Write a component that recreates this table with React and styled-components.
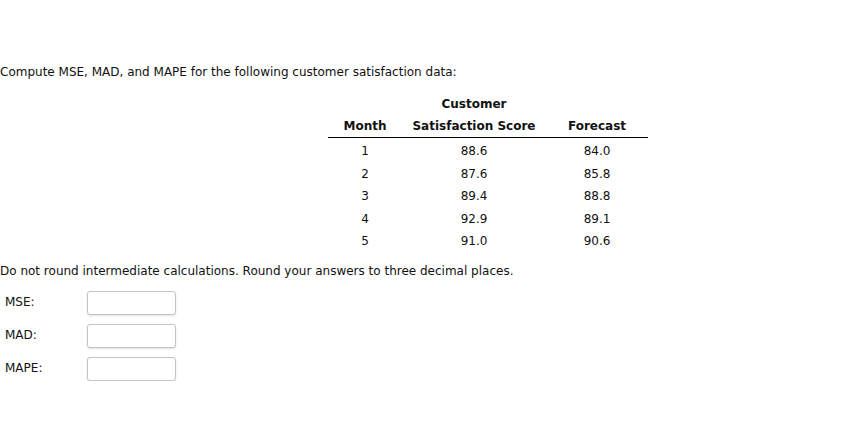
import React from "react";
import styled, { createGlobalStyle } from "styled-components";

const GlobalStyle = createGlobalStyle`
  html, body {
    margin: 0;
    padding: 0;
    background: #ffffff;
  }
  body {
    font-family: Verdana, "DejaVu Sans", sans-serif;
    font-size: 12px;
    color: #111111;
  }
`;

const Page = styled.div`
  padding-top: 64px;
  display: flex;
  flex-direction: column;
`;

const Prompt = styled.p`
  margin: 0;
  line-height: 16px;
`;

const DataTable = styled.table`
  margin: 13px 0 0 328px;
  border-collapse: collapse;
  width: 320px;
  table-layout: fixed;
`;

const HeadCell = styled.th`
  font-weight: bold;
  text-align: center;
  padding: 0;
  height: ${(p) => p.$h}px;
  vertical-align: middle;
  border-bottom: ${(p) => (p.$rule ? "1px solid #000" : "none")};
`;

const Cell = styled.td`
  text-align: center;
  padding: 4px 0 0;
  height: 18.5px;
  vertical-align: middle;
`;

const Note = styled.p`
  margin: 12px 0 0;
  line-height: 16px;
`;

const Form = styled.div`
  margin-top: 12px;
  display: flex;
  flex-direction: column;
  gap: 9px;
  padding-left: 5px;
`;

const FieldRow = styled.label`
  display: grid;
  grid-template-columns: 82px 89px;
  align-items: center;
`;

const FieldLabel = styled.span`
  font-size: 12px;
  margin-top: -2px;
`;

const Box = styled.input`
  box-sizing: border-box;
  width: 89px;
  height: 24px;
  margin: 0;
  border: 1px solid #c4c4c4;
  border-radius: 3px;
  box-shadow: 0 1px 2px rgba(0, 0, 0, 0.12);
  background: #fff;
  outline: none;
  font: inherit;
`;

const rows = [
  ["1", "88.6", "84.0"],
  ["2", "87.6", "85.8"],
  ["3", "89.4", "88.8"],
  ["4", "92.9", "89.1"],
  ["5", "91.0", "90.6"],
];

export default function App() {
  return (
    <>
      <GlobalStyle />
      <Page>
        <Prompt>
          Compute MSE, MAD, and MAPE for the following customer satisfaction data:
        </Prompt>
        <DataTable>
          <colgroup>
            <col style={{ width: 74 }} />
            <col style={{ width: 144 }} />
            <col style={{ width: 102 }} />
          </colgroup>
          <thead>
            <tr>
              <HeadCell $h={21} />
              <HeadCell $h={21}>Customer</HeadCell>
              <HeadCell $h={21} />
            </tr>
            <tr>
              <HeadCell $h={23} $rule>Month</HeadCell>
              <HeadCell $h={23} $rule>Satisfaction Score</HeadCell>
              <HeadCell $h={23} $rule>Forecast</HeadCell>
            </tr>
          </thead>
          <tbody>
            {rows.map((r) => (
              <tr key={r[0]}>
                <Cell>{r[0]}</Cell>
                <Cell>{r[1]}</Cell>
                <Cell>{r[2]}</Cell>
              </tr>
            ))}
          </tbody>
        </DataTable>
        <Note>
          Do not round intermediate calculations. Round your answers to three decimal places.
        </Note>
        <Form>
          {["MSE:", "MAD:", "MAPE:"].map((l) => (
            <FieldRow key={l}>
              <FieldLabel>{l}</FieldLabel>
              <Box type="text" />
            </FieldRow>
          ))}
        </Form>
      </Page>
    </>
  );
}
